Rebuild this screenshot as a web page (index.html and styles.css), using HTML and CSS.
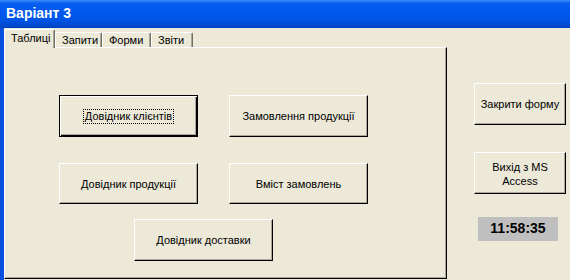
FILE: index.html
```html
<!doctype html>
<html lang="uk">
<head>
  <meta charset="UTF-8">
  <title>Варіант 3</title>
  <link rel="stylesheet" href="styles.css">
</head>
<body>
  <div class="window">
    <div class="titlebar">Варіант 3</div>

    <div class="frame">
      <div class="tabs-area">
        <div class="tabstrip">
          <div class="tab active">Таблиці</div>
          <div class="tab">Запити</div>
          <div class="tab">Форми</div>
          <div class="tab">Звіти</div>
        </div>

        <div class="panel">
          <div class="row row-first">
            <button class="btn focused"><span class="focus-ring">Довідник клієнтів</span></button>
            <button class="btn">Замовлення продукції</button>
          </div>
          <div class="row row-second">
            <button class="btn">Довідник продукції</button>
            <button class="btn">Вміст замовлень</button>
          </div>
          <div class="row row-third">
            <button class="btn">Довідник доставки</button>
          </div>
        </div>
      </div>

      <div class="side">
        <button class="btn side-btn btn-close">Закрити форму</button>
        <button class="btn side-btn btn-exit">Вихід з MS<br>Access</button>
        <div class="clock">11:58:35</div>
      </div>
    </div>
  </div>
</body>
</html>
```

FILE: styles.css
```css
body {
    margin: 0;
    background: #ece9d8;
    font-family: 'Liberation Sans', Arial, sans-serif;
    font-size: 11px;
    color: #000;
    overflow: hidden;
}

.window {
    width: 570px;
    height: 280px;
    display: flex;
    flex-direction: column;
}

.titlebar {
    height: 28px;
    box-sizing: border-box;
    padding: 5px 0 0 6px;
    color: #fff;
    font-weight: bold;
    font-size: 14px;
    background: linear-gradient(to bottom, #3d8ef9 0, #0a5fef 3px, #0058ee 10px, #0055e5 20px, #0046c8 27px, #0040b8 28px);
}

.frame {
    flex: 1;
    display: flex;
    border-left: 4px solid #0a4fdc;
}

.tabs-area {
    width: 443px;
    padding-top: 1px;
    display: flex;
    flex-direction: column;
}

.tabstrip {
    display: flex;
    align-items: flex-end;
    height: 18px;
}

.tab {
    height: 15px;
    box-sizing: border-box;
    padding: 1px 6px 0 6px;
    background: #ece9d8;
    border-top: 1px solid #fff;
    border-left: 1px solid #fff;
    border-right: 1px solid #716f64;
    box-shadow: inset -1px 0 0 #aca899;
    border-radius: 2px 2px 0 0;
}

.tab.active {
    width: 51px;
    height: 19px;
    padding: 2px 6px 0 6px;
    position: relative;
    z-index: 1;
    margin-bottom: -1px;
}

.tab:nth-child(2) { width: 47px; }
.tab:nth-child(3) { width: 49px; }
.tab:nth-child(4) { width: 42px; }

.panel {
    flex: 1;
    box-sizing: border-box;
    margin-bottom: 1px;
    border-top: 1px solid #fff;
    border-left: 1px solid #fff;
    border-right: 1px solid #000;
    border-bottom: 1px solid #000;
    box-shadow: inset -1px -1px 0 #aca899;
    padding: 47px 0 0 54px;
    display: flex;
    flex-direction: column;
}

.row {
    display: flex;
    gap: 31px;
}

.row-first { margin-bottom: 26px; }
.row-second { margin-bottom: 15px; }
.row-third { padding-left: 75px; }

.btn {
    width: 139px;
    height: 42px;
    box-sizing: border-box;
    padding: 0;
    font-family: 'Liberation Sans', Arial, sans-serif;
    font-size: 11px;
    font-weight: normal;
    color: #000;
    background: #ece9d8;
    border-top: 1px solid #fff;
    border-left: 1px solid #fff;
    border-right: 1px solid #000;
    border-bottom: 1px solid #000;
    box-shadow: inset -1px -1px 0 #aca899;
    border-radius: 0;
}

.row-second .btn { height: 41px; }

.btn.focused {
    border: 1px solid #000;
    box-shadow: inset 1px 1px 0 #fff, inset -1px -1px 0 #000, inset -2px -2px 0 #aca899;
}

.focus-ring {
    display: inline-block;
    padding: 0 1px 1px 1px;
    outline: 1px dotted #000;
    outline-offset: 0;
}

.side {
    display: flex;
    flex-direction: column;
    padding: 55px 0 0 27px;
}

.side-btn {
    width: 92px;
}

.btn-close { margin-bottom: 27px; }
.btn-exit { line-height: 14px; padding-top: 1px; margin-bottom: 23px; }

.clock {
    margin-left: 4px;
    width: 80px;
    height: 24px;
    box-sizing: border-box;
    background: #bfbfbf;
    font-weight: bold;
    font-size: 14px;
    text-align: center;
    padding-top: 3px;
}
```
